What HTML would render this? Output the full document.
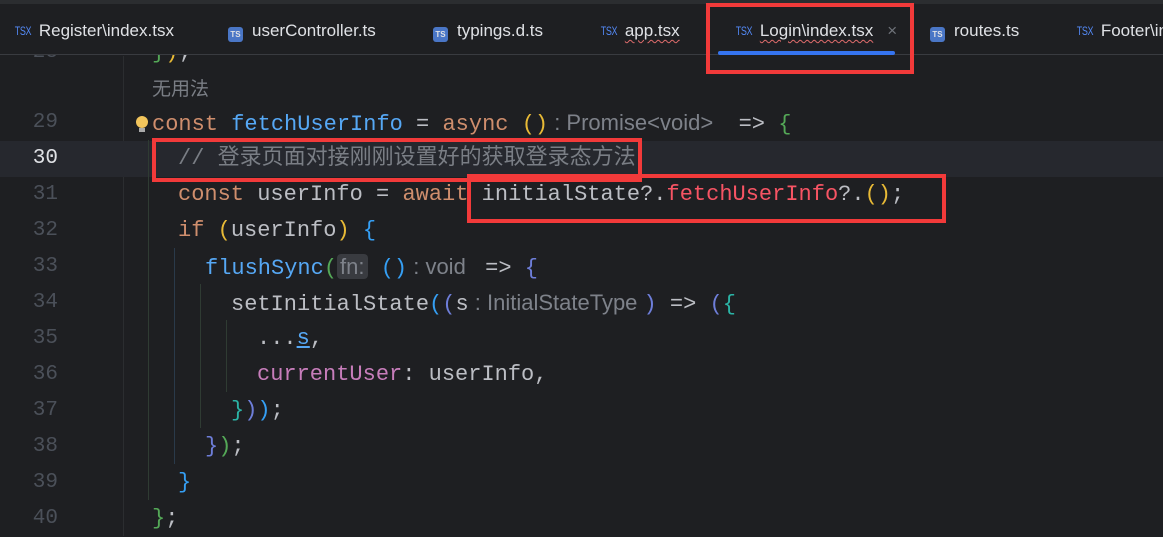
<!DOCTYPE html>
<html><head><meta charset="utf-8"><style>
*{margin:0;padding:0;box-sizing:border-box}
body{width:1163px;height:536px;background:#1e1f22;overflow:hidden;position:relative;font-family:"Liberation Mono",monospace;}
.top{position:absolute;left:0;top:0;width:1163px;height:4px;background:#2b2d30;z-index:5}
.tabs{position:absolute;left:0;top:4px;width:1163px;height:51px;background:#1e1f22;border-bottom:1px solid #393b40;z-index:5}
.tab{position:absolute;top:17px;font-family:"Liberation Sans",sans-serif;font-size:17px;color:#dfe1e5;white-space:nowrap}
.tsx{font-family:"Liberation Sans",sans-serif;font-size:12px;color:#548af7;transform:scaleX(.75);display:inline-block;margin-right:5px;letter-spacing:-0.5px;vertical-align:1px}
.ts{display:inline-block;width:15px;height:15px;background:#4a76c6;border-radius:3px;color:#dfe1e5;font-size:8px;font-weight:bold;text-align:center;line-height:15px;margin-right:9px;vertical-align:-1px}
.sq{text-decoration:underline wavy #e06c6c;text-decoration-thickness:1px;text-underline-offset:3px}
.gut{position:absolute;left:123px;top:56px;width:1px;height:480px;background:#2b2d30}
.cur{position:absolute;left:0;top:141px;width:1163px;height:36px;background:#26282e}
.ln{position:absolute;left:0;width:58px;text-align:right;font-size:21px;color:#4b5059;line-height:36px}
.c{position:absolute;font-size:22px;line-height:36px;white-space:pre;color:#bcbec4}
.k{color:#cf8e6d}.f{color:#56a8f5}.cm{color:#7a7e85;font-family:"Liberation Mono","Noto Sans CJK SC",monospace}
.h{color:#7e828a;font-family:"Liberation Sans",sans-serif;font-size:22px}
.p{color:#c77dbb}.r{color:#f75464}.y{color:#e8ba36}.g{color:#54a857}.b{color:#359ff4}.v{color:#6e7ed9}.t{color:#2bb3a5}
.box{position:absolute;border:4px solid #f23a3a;z-index:6}
.guide{position:absolute;width:1px;background:#2f3b33}
</style></head><body>
<div class="top"></div>
<div class="tabs">
<div class="tab" style="left:12px"><span class="tsx">TSX</span>Register\index.tsx</div>
<div class="tab" style="left:228px"><span class="ts">TS</span>userController.ts</div>
<div class="tab" style="left:433px"><span class="ts">TS</span>typings.d.ts</div>
<div class="tab" style="left:598px"><span class="tsx">TSX</span><span class="sq">app.tsx</span></div>
<div class="tab" style="left:733px"><span class="tsx">TSX</span><span class="sq">Login\index.tsx</span><span style="color:#6f737a;margin-left:14px">×</span></div>
<div class="tab" style="left:930px"><span class="ts">TS</span>routes.ts</div>
<div class="tab" style="left:1074px"><span class="tsx">TSX</span>Footer\in</div>
</div>
<div style="position:absolute;left:718px;top:51px;width:177px;height:4px;background:#3574f0;border-radius:2px;z-index:6"></div>
<div class="gut"></div>
<div class="cur"></div>
<div class="ln" style="top:35px">28</div>
<div class="c" style="left:152px;top:35px"><span class="g">}</span><span class="y">)</span>;</div>
<div class="c cm" style="left:152px;top:70px;font-size:19px;font-family:'Noto Sans CJK SC',sans-serif">无用法</div>
<div class="ln" style="top:105px">29</div>
<div style="position:absolute;left:136px;top:116px;width:12px;height:12px;border-radius:6px;background:#f2c55c"></div>
<div style="position:absolute;left:139px;top:128px;width:6px;height:4px;background:#aaa"></div>
<div class="c" style="left:152px;top:105px"><span class="k">const </span><span class="f">fetchUserInfo</span> = <span class="k">async </span><span class="y">()</span><span class="h"> : Promise&lt;void&gt;  </span> =&gt; <span class="g">{</span></div>
<div class="ln" style="top:141px;color:#dfe1e5">30</div>
<div class="c cm" style="left:178px;top:141px">// <span style="font-size:22px">登录页面对接刚刚设置好的获取登录态方法</span></div>
<div class="ln" style="top:177px">31</div>
<div class="c" style="left:178px;top:177px"><span class="k">const </span>userInfo = <span class="k">await </span>initialState?.<span class="r">fetchUserInfo</span>?.<span class="y">()</span>;</div>
<div class="ln" style="top:213px">32</div>
<div class="c" style="left:178px;top:213px"><span class="k">if </span><span class="y">(</span>userInfo<span class="y">)</span> <span class="b">{</span></div>
<div class="ln" style="top:249px">33</div>
<div class="c" style="left:205px;top:249px"><span class="f">flushSync</span><span class="g">(</span><span class="h" style="background:#393b40;border-radius:4px;padding:0 3px">fn:</span> <span class="b">()</span><span class="h"> : void </span> =&gt; <span class="v">{</span></div>
<div class="ln" style="top:285px">34</div>
<div class="c" style="left:231px;top:285px">setInitialState<span class="b">(</span><span class="v">(</span>s<span class="h"> : InitialStateType </span><span class="v">)</span> =&gt; <span class="v">(</span><span class="t">{</span></div>
<div class="ln" style="top:321px">35</div>
<div class="c" style="left:257px;top:321px">...<span style="color:#56a8f5;text-decoration:underline">s</span>,</div>
<div class="ln" style="top:357px">36</div>
<div class="c" style="left:257px;top:357px"><span class="p">currentUser</span>: userInfo,</div>
<div class="ln" style="top:393px">37</div>
<div class="c" style="left:231px;top:393px"><span class="t">}</span><span class="v">)</span><span class="b">)</span>;</div>
<div class="ln" style="top:429px">38</div>
<div class="c" style="left:205px;top:429px"><span class="v">}</span><span class="g">)</span>;</div>
<div class="ln" style="top:465px">39</div>
<div class="c" style="left:178px;top:465px"><span class="b">}</span></div>
<div class="ln" style="top:501px">40</div>
<div class="c" style="left:152px;top:501px"><span class="g">}</span>;</div>
<div class="guide" style="left:148px;top:140px;height:360px"></div>
<div class="guide" style="left:174px;top:248px;height:216px;background:#2a3a4a"></div>
<div class="guide" style="left:200px;top:284px;height:144px"></div>
<div class="guide" style="left:226px;top:320px;height:72px"></div>
<div class="box" style="left:706px;top:3px;width:208px;height:71px"></div>
<div class="box" style="left:152px;top:138px;width:490px;height:44px"></div>
<div class="box" style="left:467px;top:174px;width:479px;height:49px"></div>
</body></html>
